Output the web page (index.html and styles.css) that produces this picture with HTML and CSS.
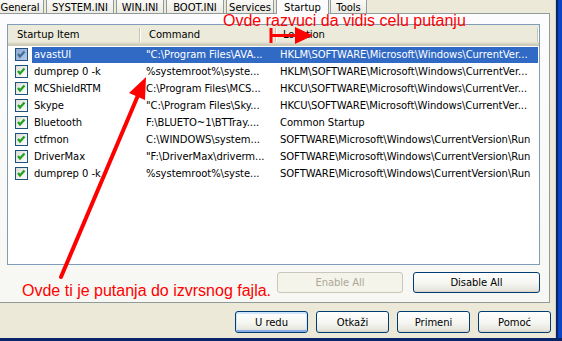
FILE: index.html
```html
<!DOCTYPE html>
<html lang="sr">
<head>
    <meta charset="UTF-8" />
    <title>System Configuration Utility</title>
    <link rel="stylesheet" href="styles.css">
</head>
<body>

    <div class="window">
        <div class="dialog">
            <div class="tabs">
                <div class="tab tab-general">General</div>
                <div class="tab tab-system">SYSTEM.INI</div>
                <div class="tab tab-win">WIN.INI</div>
                <div class="tab tab-boot">BOOT.INI</div>
                <div class="tab tab-services">Services</div>
                <div class="tab tab-startup active">Startup</div>
                <div class="tab tab-tools">Tools</div>
            </div>

            <div class="panel">
                <div class="listview">
                    <div class="lv-header">
                        <div class="hcol hcol-name">Startup Item</div>
                        <div class="hcol hcol-cmd">Command</div>
                        <div class="hcol hcol-loc">Location</div>
                    </div>

                    <div class="lv-row selected">
                        <div class="check-cell"><span class="check"><svg width="11" height="11" viewBox="0 0 11 11"><polyline points="2,5 4,7.5 8.5,2.5" /></svg></span></div>
                        <div class="row-body">
                            <div class="cell cell-name">avastUI</div>
                            <div class="cell cell-cmd">"C:\Program Files\AVA...</div>
                            <div class="cell cell-loc">HKLM\SOFTWARE\Microsoft\Windows\CurrentVer...</div>
                        </div>
                    </div>
                    <div class="lv-row">
                        <div class="check-cell"><span class="check"><svg width="11" height="11" viewBox="0 0 11 11"><polyline points="2,5 4,7.5 8.5,2.5" /></svg></span></div>
                        <div class="row-body">
                            <div class="cell cell-name">dumprep 0 -k</div>
                            <div class="cell cell-cmd">%systemroot%\syste...</div>
                            <div class="cell cell-loc">HKLM\SOFTWARE\Microsoft\Windows\CurrentVer...</div>
                        </div>
                    </div>
                    <div class="lv-row">
                        <div class="check-cell"><span class="check"><svg width="11" height="11" viewBox="0 0 11 11"><polyline points="2,5 4,7.5 8.5,2.5" /></svg></span></div>
                        <div class="row-body">
                            <div class="cell cell-name">MCShieldRTM</div>
                            <div class="cell cell-cmd">C:\Program Files\MCS...</div>
                            <div class="cell cell-loc">HKCU\SOFTWARE\Microsoft\Windows\CurrentVer...</div>
                        </div>
                    </div>
                    <div class="lv-row">
                        <div class="check-cell"><span class="check"><svg width="11" height="11" viewBox="0 0 11 11"><polyline points="2,5 4,7.5 8.5,2.5" /></svg></span></div>
                        <div class="row-body">
                            <div class="cell cell-name">Skype</div>
                            <div class="cell cell-cmd">"C:\Program Files\Sky...</div>
                            <div class="cell cell-loc">HKCU\SOFTWARE\Microsoft\Windows\CurrentVer...</div>
                        </div>
                    </div>
                    <div class="lv-row">
                        <div class="check-cell"><span class="check"><svg width="11" height="11" viewBox="0 0 11 11"><polyline points="2,5 4,7.5 8.5,2.5" /></svg></span></div>
                        <div class="row-body">
                            <div class="cell cell-name">Bluetooth</div>
                            <div class="cell cell-cmd">F:\BLUETO~1\BTTray....</div>
                            <div class="cell cell-loc">Common Startup</div>
                        </div>
                    </div>
                    <div class="lv-row">
                        <div class="check-cell"><span class="check"><svg width="11" height="11" viewBox="0 0 11 11"><polyline points="2,5 4,7.5 8.5,2.5" /></svg></span></div>
                        <div class="row-body">
                            <div class="cell cell-name">ctfmon</div>
                            <div class="cell cell-cmd">C:\WINDOWS\system...</div>
                            <div class="cell cell-loc">SOFTWARE\Microsoft\Windows\CurrentVersion\Run</div>
                        </div>
                    </div>
                    <div class="lv-row">
                        <div class="check-cell"><span class="check"><svg width="11" height="11" viewBox="0 0 11 11"><polyline points="2,5 4,7.5 8.5,2.5" /></svg></span></div>
                        <div class="row-body">
                            <div class="cell cell-name">DriverMax</div>
                            <div class="cell cell-cmd">"F:\DriverMax\driverm...</div>
                            <div class="cell cell-loc">SOFTWARE\Microsoft\Windows\CurrentVersion\Run</div>
                        </div>
                    </div>
                    <div class="lv-row">
                        <div class="check-cell"><span class="check"><svg width="11" height="11" viewBox="0 0 11 11"><polyline points="2,5 4,7.5 8.5,2.5" /></svg></span></div>
                        <div class="row-body">
                            <div class="cell cell-name">dumprep 0 -k</div>
                            <div class="cell cell-cmd">%systemroot%\syste...</div>
                            <div class="cell cell-loc">SOFTWARE\Microsoft\Windows\CurrentVersion\Run</div>
                        </div>
                    </div>
                </div>

                <div class="panel-buttons">
                    <button class="btn btn-wide" disabled>Enable All</button>
                    <button class="btn btn-wide">Disable All</button>
                </div>
            </div>

            <div class="dialog-buttons">
                <button class="btn btn-default">U redu</button>
                <button class="btn">Otkaži</button>
                <button class="btn">Primeni</button>
                <button class="btn">Pomoć</button>
            </div>
        </div>
        <div class="frame"></div>
    </div>

    <!-- crvene napomene preko slike -->
    <div class="note note-top">Ovde razvuci da vidis celu putanju</div>
    <div class="note note-bottom">Ovde ti je putanja do izvrsnog fajla.</div>

    <svg class="arrows" width="562" height="341" viewBox="0 0 562 341">
        <line x1="271" y1="28" x2="271" y2="43" stroke="#ff0000" stroke-width="3" />
        <line x1="271" y1="35.5" x2="298" y2="35.5" stroke="#ff0000" stroke-width="3" />
        <polygon points="295,27 313,35.5 295,44" fill="#ff0000" />
        <line x1="61" y1="277" x2="139" y2="93" stroke="#ff0000" stroke-width="4" stroke-linecap="round" />
        <polygon points="146,77 129,93 145,100" fill="#ff0000" />
    </svg>

</body>
</html>
```

FILE: styles.css
```css
:root {
    --face: #ece9d8;
    --tab-border: #919b9c;
    --page: #fcfcfe;
    --lv-border: #7f9db9;
    --highlight: #316ac5;
    --btn-border: #003c74;
    --note: #ff0000;
}

* {
    box-sizing: border-box;
    margin: 0;
    padding: 0;
}

body {
    width: 562px;
    height: 341px;
    overflow: hidden;
    position: relative;
    background: var(--face);
    font-family: 'DejaVu Sans', sans-serif;
    font-size: 10px;
    letter-spacing: -0.05px;
    color: #000;
}

.window {
    display: flex;
    height: 341px;
    border-bottom: 3px solid #0a246a;
}

.dialog {
    flex: 1;
    display: flex;
    flex-direction: column;
}

.frame {
    width: 7px;
    background: linear-gradient(to right, #d4d0c8 0 1px, #0a246a 1px 3px, #0c45c4 3px);
}

/* tabs */

.tabs {
    display: flex;
    align-items: flex-start;
    gap: 2px;
    height: 19px;
    margin-top: -6px;
    margin-left: -4px;
}

.tab {
    height: 19px;
    padding-top: 6px;
    line-height: 13px;
    text-align: center;
    border: 1px solid var(--tab-border);
    border-bottom: none;
    border-radius: 3px 3px 0 0;
    background: linear-gradient(#ffffff, #f4f3ee 60%, #ebeae3);
    white-space: nowrap;
}

    .tab.active {
        height: 20px;
        background: var(--page);
        position: relative;
        z-index: 1;
    }

.tab-general { width: 48px; }
.tab-system { width: 68px; }
.tab-win { width: 48px; }
.tab-boot { width: 58px; }
.tab-services { width: 48px; }
.tab-startup { width: 53px; }
.tab-tools { width: 37px; margin-left: -1px; }

/* page */

.panel {
    width: 553px;
    margin-left: -3px;
    padding: 10px 9px 9px 9px;
    border: 1px solid var(--tab-border);
    background: linear-gradient(var(--page), #f7f7f3);
}

.listview {
    height: 241px;
    border: 1px solid var(--lv-border);
    background: #fff;
}

.lv-header {
    display: flex;
    height: 21px;
    padding-top: 3px;
    background: linear-gradient(#ebeadb 0 17px, #e3e0d0 17px 18px, #dcd8c7 18px 19px, #d0ccba 19px);
}

.hcol {
    height: 14px;
    line-height: 14px;
    border-right: 1px solid #c7c5b2;
    box-shadow: 1px 0 0 #fff;
    white-space: nowrap;
    overflow: hidden;
}

.hcol-name { width: 132px; padding-left: 9px; }
.hcol-cmd { width: 136px; padding-left: 9px; }
.hcol-loc { width: 262px; padding-left: 7px; }

.lv-row {
    display: flex;
    height: 17px;
}

.check-cell {
    width: 24px;
    padding: 2px 0 0 7px;
}

.check {
    display: block;
    width: 13px;
    height: 13px;
    border: 1px solid #1c5180;
    background: linear-gradient(135deg, #dcdcd7, #ffffff);
}

    .check svg {
        display: block;
    }

    .check polyline {
        fill: none;
        stroke: #21a121;
        stroke-width: 2.2;
    }

.selected .check {
    background: linear-gradient(135deg, #8fa8d6, #b7c8ea);
}

    .selected .check polyline {
        stroke: #3c6f8f;
    }

.row-body {
    display: flex;
    width: 506px;
    height: 16px;
    margin-top: 1px;
    line-height: 16px;
    white-space: nowrap;
}

.selected .row-body {
    background: var(--highlight);
    color: #fff;
}

.cell {
    overflow: hidden;
}

.cell-name { width: 108px; padding-left: 2px; }
.cell-cmd { width: 136px; padding-left: 6px; }
.cell-loc { flex: 1; padding-left: 4px; }

/* buttons */

.panel-buttons {
    display: flex;
    justify-content: flex-end;
    gap: 10px;
    margin-top: 7px;
}

.dialog-buttons {
    display: flex;
    justify-content: flex-end;
    gap: 8px;
    margin-top: 8px;
    padding-right: 4px;
}

.btn {
    width: 73px;
    height: 22px;
    font-family: inherit;
    font-size: 10px;
    letter-spacing: -0.05px;
    color: #000;
    border: 1px solid var(--btn-border);
    border-radius: 3px;
    background: linear-gradient(#ffffff, #f5f5f1 55%, #e6e5dd 90%, #d6d0c5);
}

.btn-wide {
    width: 126px;
    height: 21px;
}

    .btn-wide + .btn-wide {
        width: 127px;
    }

.btn:disabled {
    color: #aca899;
    border-color: #c9c7ba;
    background: #f5f4ea;
}

.btn-default {
    box-shadow: inset 0 1px 0 1px #cee7ff, inset 0 -1px 0 1px #89ade4;
}

/* annotations */

.note {
    position: absolute;
    font-family: 'Liberation Sans', Arial, sans-serif;
    font-size: 16px;
    line-height: 18px;
    letter-spacing: 0;
    color: var(--note);
    white-space: nowrap;
}

.note-top {
    left: 223px;
    top: 12px;
}

.note-bottom {
    left: 22px;
    top: 282px;
}

.arrows {
    position: absolute;
    left: 0;
    top: 0;
}
```
